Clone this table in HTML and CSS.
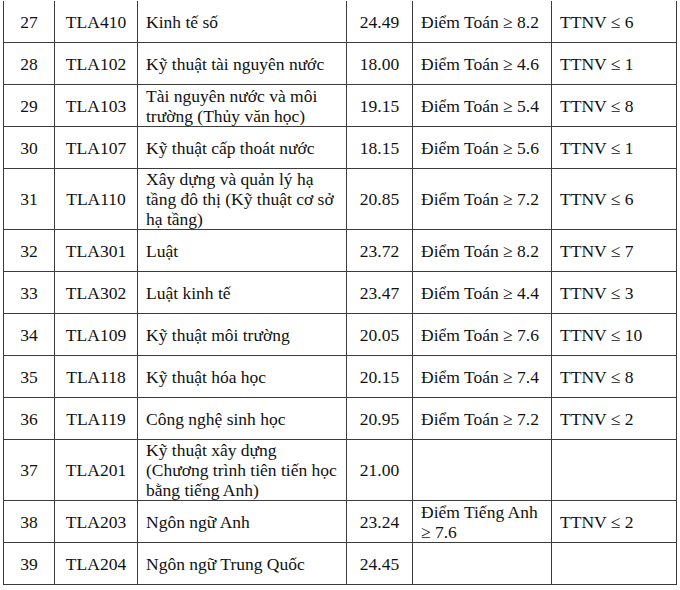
FILE: index.html
```html
<!DOCTYPE html>
<html lang="vi">
<head>
<meta charset="utf-8">
<link rel="stylesheet" href="styles.css">
</head>
<body>
<table class="grid">
<colgroup>
<col class="c-no"><col class="c-code"><col class="c-name"><col class="c-score"><col class="c-cond"><col class="c-ttnv">
</colgroup>
<tbody>
<tr><td class="ctr">27</td><td class="ctr">TLA410</td><td>Kinh tế số</td><td class="ctr">24.49</td><td>Điểm Toán ≥ 8.2</td><td>TTNV ≤ 6</td></tr>
<tr><td class="ctr">28</td><td class="ctr">TLA102</td><td>Kỹ thuật tài nguyên nước</td><td class="ctr">18.00</td><td>Điểm Toán ≥ 4.6</td><td>TTNV ≤ 1</td></tr>
<tr><td class="ctr">29</td><td class="ctr">TLA103</td><td>Tài nguyên nước và môi trường (Thủy văn học)</td><td class="ctr">19.15</td><td>Điểm Toán ≥ 5.4</td><td>TTNV ≤ 8</td></tr>
<tr><td class="ctr">30</td><td class="ctr">TLA107</td><td>Kỹ thuật cấp thoát nước</td><td class="ctr">18.15</td><td>Điểm Toán ≥ 5.6</td><td>TTNV ≤ 1</td></tr>
<tr><td class="ctr">31</td><td class="ctr">TLA110</td><td>Xây dựng và quản lý hạ tầng đô thị (Kỹ thuật cơ sở hạ tầng)</td><td class="ctr">20.85</td><td>Điểm Toán ≥ 7.2</td><td>TTNV ≤ 6</td></tr>
<tr><td class="ctr">32</td><td class="ctr">TLA301</td><td>Luật</td><td class="ctr">23.72</td><td>Điểm Toán ≥ 8.2</td><td>TTNV ≤ 7</td></tr>
<tr><td class="ctr">33</td><td class="ctr">TLA302</td><td>Luật kinh tế</td><td class="ctr">23.47</td><td>Điểm Toán ≥ 4.4</td><td>TTNV ≤ 3</td></tr>
<tr><td class="ctr">34</td><td class="ctr">TLA109</td><td>Kỹ thuật môi trường</td><td class="ctr">20.05</td><td>Điểm Toán ≥ 7.6</td><td>TTNV ≤ 10</td></tr>
<tr><td class="ctr">35</td><td class="ctr">TLA118</td><td>Kỹ thuật hóa học</td><td class="ctr">20.15</td><td>Điểm Toán ≥ 7.4</td><td>TTNV ≤ 8</td></tr>
<tr><td class="ctr">36</td><td class="ctr">TLA119</td><td>Công nghệ sinh học</td><td class="ctr">20.95</td><td>Điểm Toán ≥ 7.2</td><td>TTNV ≤ 2</td></tr>
<tr><td class="ctr">37</td><td class="ctr">TLA201</td><td>Kỹ thuật xây dựng (Chương trình tiên tiến học bằng tiếng Anh)</td><td class="ctr">21.00</td><td></td><td></td></tr>
<tr><td class="ctr">38</td><td class="ctr">TLA203</td><td>Ngôn ngữ Anh</td><td class="ctr">23.24</td><td>Điểm Tiếng Anh ≥ 7.6</td><td>TTNV ≤ 2</td></tr>
<tr><td class="ctr">39</td><td class="ctr">TLA204</td><td>Ngôn ngữ Trung Quốc</td><td class="ctr">24.45</td><td></td><td></td></tr>
</tbody>
</table>
</body>
</html>
```
FILE: styles.css
```css
html, body {
  margin: 0;
  padding: 0;
  background: #fff;
}
body {
  font-family: "Liberation Serif", serif;
  font-size: 17.5px;
  color: #111;
}
.grid {
  border-collapse: collapse;
  table-layout: fixed;
  width: 674px;
  margin-left: 3px;
  margin-top: 1px;
}
.c-no { width: 51px; }
.c-code { width: 83px; }
.c-name { width: 209px; }
.c-score { width: 66px; }
.c-cond { width: 139px; }
.c-ttnv { width: 125px; }
.grid td {
  border: 1px solid #3c3c3c;
  padding: 0 7px 0 8px;
  height: 41px;
  line-height: 20px;
  vertical-align: middle;
  text-align: left;
  font-family: "Liberation Serif", serif;
}
.grid tr:first-child td {
  border-top: none;
  height: 41px;
}
.grid td.ctr {
  text-align: center;
  padding: 0 2px;
}
```
